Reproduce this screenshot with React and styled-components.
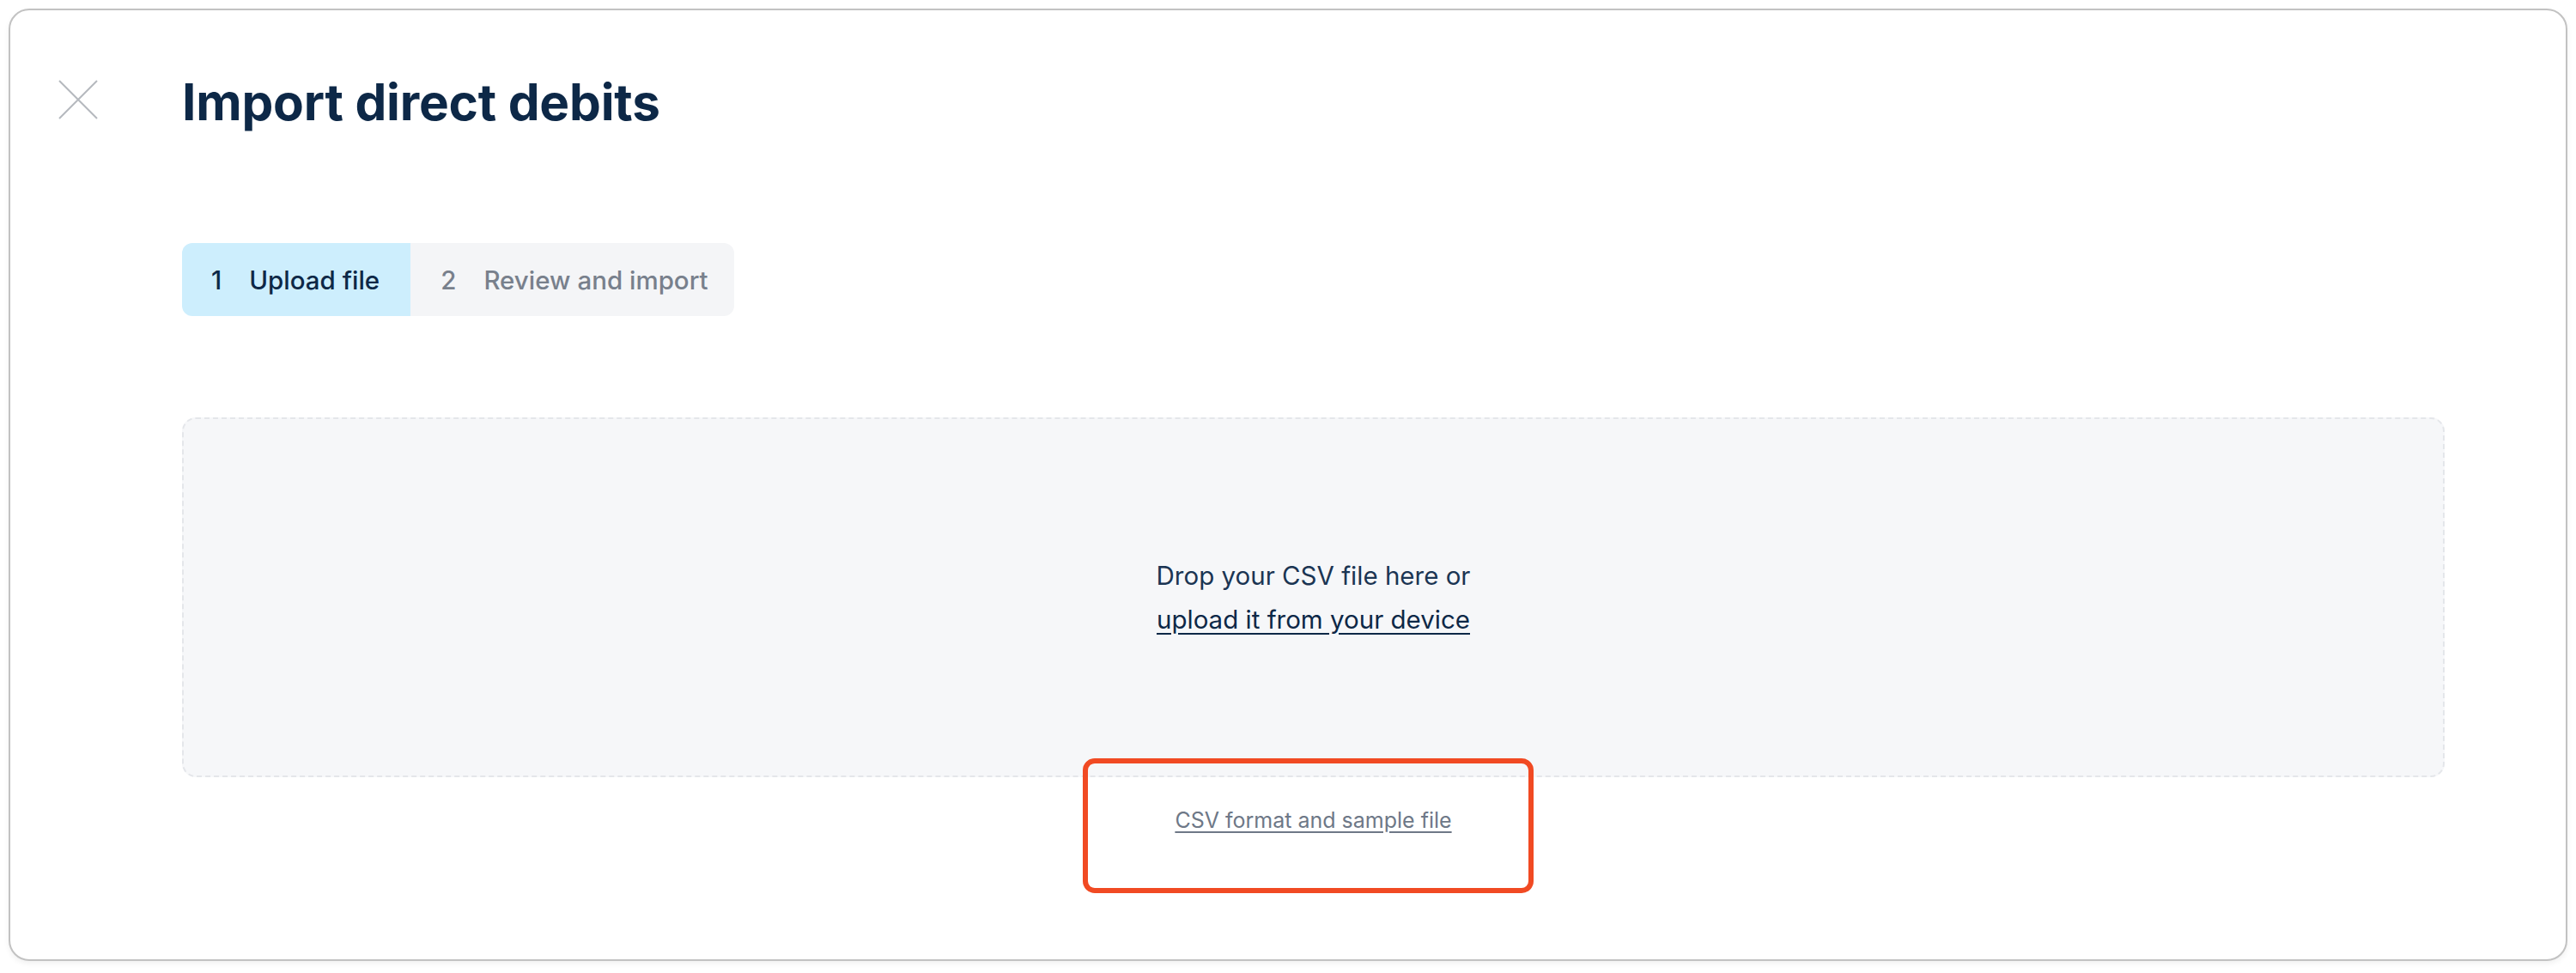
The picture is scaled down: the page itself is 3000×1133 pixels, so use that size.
import React from 'react';
import styled, { createGlobalStyle } from 'styled-components';

const GlobalStyle = createGlobalStyle`
  * {
    box-sizing: border-box;
  }
  body {
    margin: 0;
    background: #fff;
    font-family: 'Inter', 'Liberation Sans', sans-serif;
  }
`;

const StyledCard = styled.div`
  margin: 10px;
  height: 1109px;
  border: 2px solid #c2c2c2;
  border-radius: 24px;
  box-shadow: 0 3px 6px rgba(0, 0, 0, 0.06);
  background: #fff;
  display: grid;
  grid-template-columns: 145px 1fr;
  padding: 73px 141px 0 55px;
`;

const StyledClose = styled.button`
  width: 48px;
  height: 48px;
  margin-top: 7px;
  padding: 0;
  border: none;
  background: none;
  cursor: pointer;
  svg {
    display: block;
  }
`;

const StyledContent = styled.div`
  display: flex;
  flex-direction: column;
  align-items: flex-start;
`;

const StyledTitle = styled.h1`
  margin: 0;
  font-size: 58.5px;
  line-height: 68px;
  font-weight: 700;
  color: #0d2847;
  letter-spacing: -0.2px;
`;

const StyledSteps = styled.div`
  display: flex;
  margin-top: 130px;
  border-radius: 12px;
  overflow: hidden;
`;

const StyledStep = styled.div`
  display: flex;
  align-items: center;
  gap: 32px;
  height: 85px;
  padding: ${(p) => (p.active ? '0 36px 0 34px' : '0 30px 0 35px')};
  background: ${(p) => (p.active ? '#cdeefd' : '#f4f5f7')};
  color: ${(p) => (p.active ? '#0d2847' : '#78808c')};
  font-size: 29.5px;
  font-weight: 500;
`;

const StyledDropzone = styled.div`
  align-self: stretch;
  margin-top: 118px;
  height: 419px;
  border: 2px dashed #e4e6ea;
  border-radius: 16px;
  background: #f6f7f9;
  display: flex;
  flex-direction: column;
  align-items: center;
  justify-content: center;
  font-size: 29.5px;
  line-height: 51px;
  color: #1b3553;
  a {
    color: #0d2847;
    text-decoration: underline;
    text-underline-offset: 5px;
  }
`;

const StyledLinkRow = styled.div`
  align-self: stretch;
  display: flex;
  justify-content: center;
  margin-top: 36px;
`;

const StyledHighlight = styled.div`
  position: relative;
  &::after {
    content: '';
    position: absolute;
    top: -58px;
    bottom: -71px;
    left: -107px;
    right: -95px;
    border: 6px solid #f14a23;
    border-radius: 14px;
    pointer-events: none;
  }
  a {
    display: block;
    font-size: 25px;
    line-height: 28px;
    color: #6e7887;
    text-decoration: underline;
    text-underline-offset: 4px;
  }
`;

const CloseIcon = () => (
  <svg width="48" height="48" viewBox="0 0 48 48">
    <path d="M2 2 L46 46 M46 2 L2 46" stroke="#b5b9be" strokeWidth="2" fill="none" />
  </svg>
);

const App = () => {
  return (
    <>
      <GlobalStyle />
      <StyledCard>
        <StyledClose aria-label="Close">
          <CloseIcon />
        </StyledClose>
        <StyledContent>
          <StyledTitle>Import direct debits</StyledTitle>
          <StyledSteps>
            <StyledStep active>
              <span>1</span>
              <span>Upload file</span>
            </StyledStep>
            <StyledStep>
              <span>2</span>
              <span>Review and import</span>
            </StyledStep>
          </StyledSteps>
          <StyledDropzone>
            <div>Drop your CSV file here or</div>
            <a>upload it from your device</a>
          </StyledDropzone>
          <StyledLinkRow>
            <StyledHighlight>
              <a>CSV format and sample file</a>
            </StyledHighlight>
          </StyledLinkRow>
        </StyledContent>
      </StyledCard>
    </>
  );
};

export default App;
